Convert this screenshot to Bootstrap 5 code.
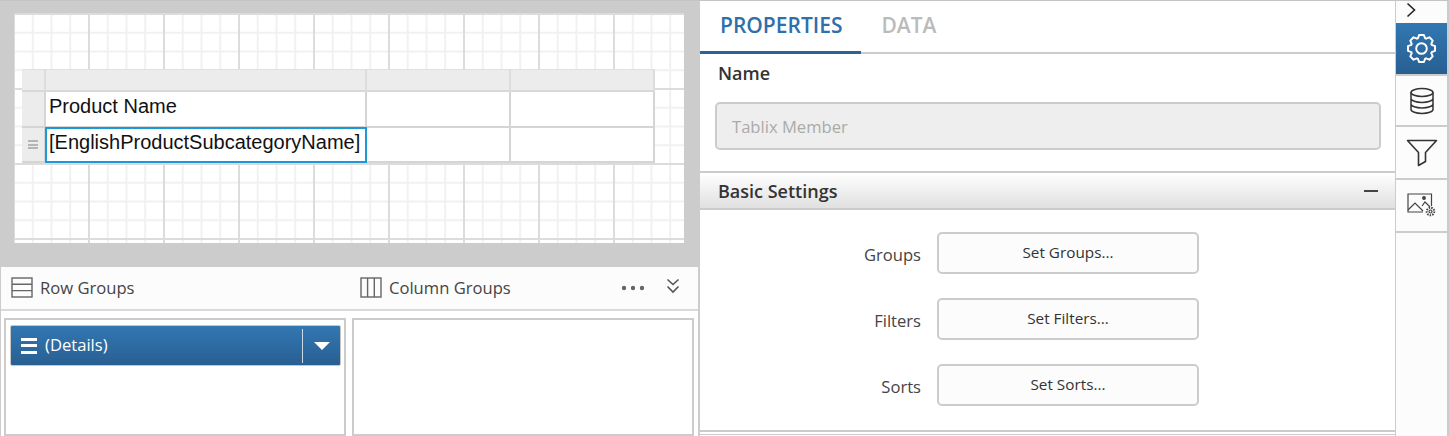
<!DOCTYPE html>
<html lang="en">

<head>
  <meta charset="UTF-8">
  <title>Report Designer</title>
  <meta name="viewport" content="width=device-width,initial-scale=1">
  <link href="https://cdn.jsdelivr.net/npm/bootstrap@5.3.3/dist/css/bootstrap.min.css" rel="stylesheet">
  <style>
    html, body { height: 436px; overflow: hidden; }
    body { font-family: "Open Sans", "Noto Sans", sans-serif; color: #333; background: #fff; }
    .app-shell { width: 1449px; height: 436px; border-top: 1px solid #c4c4c4; }

    /* left: designer */
    .designer { width: 700px; border-left: 1px solid #ccc; border-right: 2px solid #ccc; }
    .canvas-wrap { height: 266px; background: #ccc; padding: 12px 14px 23px 13px; }
    .report-page {
      height: 230px; padding: 56px 29px 0 8px; background-color: #fff;
      background-image:
        linear-gradient(to right, #dcdcdc 2px, transparent 2px),
        linear-gradient(to bottom, #dcdcdc 2px, transparent 2px),
        linear-gradient(to right, #f1f1f1 2px, transparent 2px),
        linear-gradient(to bottom, #f1f1f1 2px, transparent 2px);
      background-size: 75px 75px, 75px 75px, 18.75px 18.75px, 18.75px 18.75px;
      background-position: -1px 0, 0 0, -1px 0, 0 0;
    }
    .tablix {
      display: grid; grid-template-columns: 24px 321px 144px 144px; grid-template-rows: 23px 36px 35px;
      font-family: "Liberation Sans", Arial, sans-serif; font-size: 20px; color: #111;
    }
    .tablix-head { background: #ececec; border-right: 2px solid #dcdcdc; border-bottom: 2px solid #d8d8d8; border-top: 1px solid #e0e0e0; }
    .tablix-handle { background: #ececec; border-right: 2px solid #d5d5d5; border-bottom: 2px solid #d5d5d5; color: #aaa; }
    .tablix-cell { background: #fff; border-right: 2px solid #d5d5d5; border-bottom: 2px solid #d5d5d5; padding: 0 0 0 3px; line-height: 29px; white-space: nowrap; }
    .tablix-cell.selected { border: 2px solid #1b9ad6; margin: -1px 0 0 -1px; padding-left: 2px; line-height: 27px; }
    .handle-bars { width: 10px; height: 9px; border-top: 2px solid #b5b5b5; border-bottom: 2px solid #b5b5b5; position: relative; }
    .handle-bars::after { content: ""; position: absolute; left: 0; right: 0; top: 1.5px; height: 2px; background: #b5b5b5; }

    .groups-bar { height: 44px; background: #fcfcfc; border-bottom: 2px solid #d9d9d9; font-size: 16.6px; color: #444; padding: 0 18px 0 10px; }
    .groups-title { gap: 7px; }
    .groups-title.first-title { width: 349px; flex-shrink: 0; }
    .groups-body { height: 125px; padding: 7px 4px 0 3px; gap: 6px; }
    .group-box { width: 342px; height: 118px; border: 2px solid #ccc; padding: 5px 3px 0 4px; }
    .group-chip {
      height: 41px; width: 331px; border: 1px solid #c6c6c6; border-radius: 2px; color: #fff; font-size: 16.6px;
      background: linear-gradient(to bottom, #3277b2, #285f92); padding-left: 10px;
    }
    .chip-menu { width: 16px; height: 16px; border-top: 3px solid #fff; border-bottom: 3px solid #fff; position: relative; }
    .chip-menu::after { content: ""; position: absolute; left: 0; right: 0; top: 3.5px; height: 3px; background: #fff; }
    .chip-split { width: 1px; height: 34px; background: #c9d9e8; margin-right: 11px; }
    .chip-caret { width: 0; height: 0; border-left: 8px solid transparent; border-right: 8px solid transparent; border-top: 8px solid #fff; margin-right: 10px; }

    /* right: properties */
    .props { width: 695px; }
    .props-tabs { height: 53px; border-bottom: 2px solid #ccc; }
    .props-tab { font-size: 21px; font-weight: 600; padding: 9px 19px 0 20px; margin-bottom: -2px; color: #bbb; border-bottom: 3px solid transparent; }
    .props-tab.active { color: #2f6fab; border-bottom-color: #2a6496; }
    .name-label { font-size: 18px; font-weight: 600; padding: 6px 0 0 18px; height: 48px; color: #333; }
    .name-input.form-control {
      width: 666px; height: 48px; margin-left: 15px; border: 2px solid #ccc; border-radius: 5px; background: #eee;
      font-size: 16.6px; color: #aaa; padding: 0 15px;
    }
    .name-input.form-control::placeholder { color: #aaa; }
    .section-head {
      height: 39px; margin-top: 21px; border-top: 2px solid #ccc; border-bottom: 2px solid #ccc; padding: 1px 18px 0;
      background: linear-gradient(to bottom, #fff, #e0e0e0); font-size: 18px; font-weight: 600;
    }
    .minus-mark { width: 14px; height: 2px; background: #444; margin-right: -1px; }
    .set-rows { padding-top: 22px; gap: 24px; }
    .set-label { width: 221px; text-align: right; font-size: 16.6px; color: #444; margin-top: 5px; }
    .set-btn.btn { width: 262px; height: 42px; margin-left: 16px; border: 2px solid #ccc; border-radius: 5px; background: #fcfcfc; font-size: 15.3px; color: #333; padding: 0 0 2px; }
    .section-end { margin-top: 24px; border-top: 2px solid #ccc; height: 5px; border-bottom: 1px solid #ccc; }

    /* far right rail */
    .rail { width: 54px; border-left: 1px solid #ccc; border-right: 2px solid #ccc; background: #fcfcfc; }
    .rail-top { height: 22px; padding-left: 10px; }
    .rail-item { height: 53px; border-bottom: 2px solid #ccc; }
    .rail-item.active { background: linear-gradient(to bottom, #3277b2, #285f92); border-bottom: 0; height: 51px; }
    .rail-item.active + .rail-item { border-top: 2px solid #ccc; }
    .dots-gap { margin-right: 21px; }
  </style>
</head>

<body>
  <div class="app-shell d-flex">

    <div class="designer flex-shrink-0">
      <div class="canvas-wrap">
        <div class="report-page">
          <div class="tablix">
            <div class="tablix-head"></div>
            <div class="tablix-head"></div>
            <div class="tablix-head"></div>
            <div class="tablix-head"></div>

            <div class="tablix-handle"></div>
            <div class="tablix-cell">Product Name</div>
            <div class="tablix-cell"></div>
            <div class="tablix-cell"></div>

            <div class="tablix-handle d-flex align-items-center justify-content-center"><span class="handle-bars"></span></div>
            <div class="tablix-cell selected">[EnglishProductSubcategoryName]</div>
            <div class="tablix-cell"></div>
            <div class="tablix-cell"></div>
          </div>
        </div>
      </div>

      <div class="groups-bar d-flex align-items-center">
        <div class="groups-title first-title d-flex align-items-center">
          <svg width="22" height="22" viewBox="0 0 22 22" fill="none" stroke="#666" stroke-width="1.4"><rect x="1" y="1" width="20" height="19"/><path d="M1 7.3h20M1 13.6h20"/></svg>
          <span>Row Groups</span>
        </div>
        <div class="groups-title d-flex align-items-center flex-grow-1">
          <svg width="22" height="22" viewBox="0 0 22 22" fill="none" stroke="#666" stroke-width="1.4"><rect x="1" y="1" width="20" height="19"/><path d="M7.6 1v19M14.3 1v19"/></svg>
          <span>Column Groups</span>
        </div>
        <svg class="dots-gap flex-shrink-0" width="24" height="6" viewBox="0 0 24 6" fill="#666"><circle cx="3" cy="3" r="2.2"/><circle cx="12" cy="3" r="2.2"/><circle cx="21" cy="3" r="2.2"/></svg>
        <svg class="mb-1 flex-shrink-0" width="14" height="16" viewBox="0 0 14 16" fill="none" stroke="#555" stroke-width="1.6"><path d="M1.5 1.5 7 6.5l5.5-5M1.5 8.5 7 14l5.5-5.5"/></svg>
      </div>

      <div class="groups-body d-flex">
        <div class="group-box">
          <div class="group-chip d-flex align-items-center">
            <span class="chip-menu me-2 flex-shrink-0"></span>
            <span class="flex-grow-1">(Details)</span>
            <span class="chip-split"></span>
            <span class="chip-caret"></span>
          </div>
        </div>
        <div class="group-box"></div>
      </div>
    </div>

    <div class="props flex-shrink-0">
      <div class="props-tabs d-flex">
        <div class="props-tab active">PROPERTIES</div>
        <div class="props-tab">DATA</div>
      </div>
      <div class="name-label">Name</div>
      <input class="name-input form-control" type="text" placeholder="Tablix Member" disabled>
      <div class="section-head d-flex align-items-center justify-content-between">
        <span>Basic Settings</span>
        <span class="minus-mark"></span>
      </div>
      <div class="set-rows d-flex flex-column">
        <div class="d-flex align-items-center">
          <span class="set-label">Groups</span>
          <button class="set-btn btn" type="button">Set Groups...</button>
        </div>
        <div class="d-flex align-items-center">
          <span class="set-label">Filters</span>
          <button class="set-btn btn" type="button">Set Filters...</button>
        </div>
        <div class="d-flex align-items-center">
          <span class="set-label">Sorts</span>
          <button class="set-btn btn" type="button">Set Sorts...</button>
        </div>
      </div>
      <div class="section-end"></div>
    </div>

    <div class="rail flex-shrink-0">
      <div class="rail-top d-flex align-items-center">
        <svg class="mb-1" width="10" height="16" viewBox="0 0 10 16" fill="none" stroke="#222" stroke-width="1.6"><path d="M1.5 1.5 8.500 8l-7 6.500"/></svg>
      </div>
      <div class="rail-item active d-flex align-items-center justify-content-center">
        <svg width="29" height="29" viewBox="0 0 30 30" fill="none" stroke="#fff" stroke-width="2" stroke-linejoin="round">
          <polygon points="11.2,4.5 12.6,1 17.4,1 18.8,4.5 19.74,4.89 23.2,3.4 26.6,6.8 25.11,10.26 25.5,11.2 29,12.6 29,17.4 25.5,18.8 25.11,19.74 26.6,23.2 23.2,26.6 19.74,25.11 18.8,25.5 17.4,29 12.6,29 11.2,25.5 10.26,25.11 6.8,26.6 3.4,23.2 4.89,19.74 4.5,18.8 1,17.4 1,12.6 4.5,11.2 4.89,10.26 3.4,6.8 6.8,3.4 10.26,4.89"/>
          <circle cx="15" cy="15" r="5.5"/>
        </svg>
      </div>
      <div class="rail-item d-flex align-items-center justify-content-center">
        <svg width="26" height="28" viewBox="0 0 26 28" fill="none" stroke="#333" stroke-width="1.5">
          <ellipse cx="13" cy="5.5" rx="11" ry="4"/>
          <path d="M2 5.500v17c0 2.200 5 4 11 4s11-1.800 11-4v-17M2 11.500c0 2.200 5 4 11 4s11-1.800 11-4M2 17c0 2.200 5 4 11 4s11-1.800 11-4"/>
        </svg>
      </div>
      <div class="rail-item d-flex align-items-center justify-content-center">
        <svg width="32" height="28" viewBox="0 0 32 28" fill="none" stroke="#333" stroke-width="1.6" stroke-linejoin="round"><path d="M1.500 1.500h29L19.500 13.500v9l-7 4v-13z"/></svg>
      </div>
      <div class="rail-item d-flex align-items-center justify-content-center">
        <svg width="29" height="25" viewBox="0 0 29 25" fill="none" stroke="#444" stroke-width="1.2">
          <path d="M24.500 13V1H1v18h15"/>
          <path d="M1 17l7-7 8 8M15 13l3-4 5 5"/>
          <circle cx="17" cy="5" r="1.300" fill="#444"/>
          <circle cx="23.500" cy="18.500" r="3.800" stroke-width="2" stroke-dasharray="1.500 1.100"/>
          <circle cx="23.500" cy="18.500" r="1.500"/>
        </svg>
      </div>
    </div>
  </div>

  <script src="https://cdn.jsdelivr.net/npm/bootstrap@5.3.3/dist/js/bootstrap.bundle.min.js"></script>
</body>

</html>
